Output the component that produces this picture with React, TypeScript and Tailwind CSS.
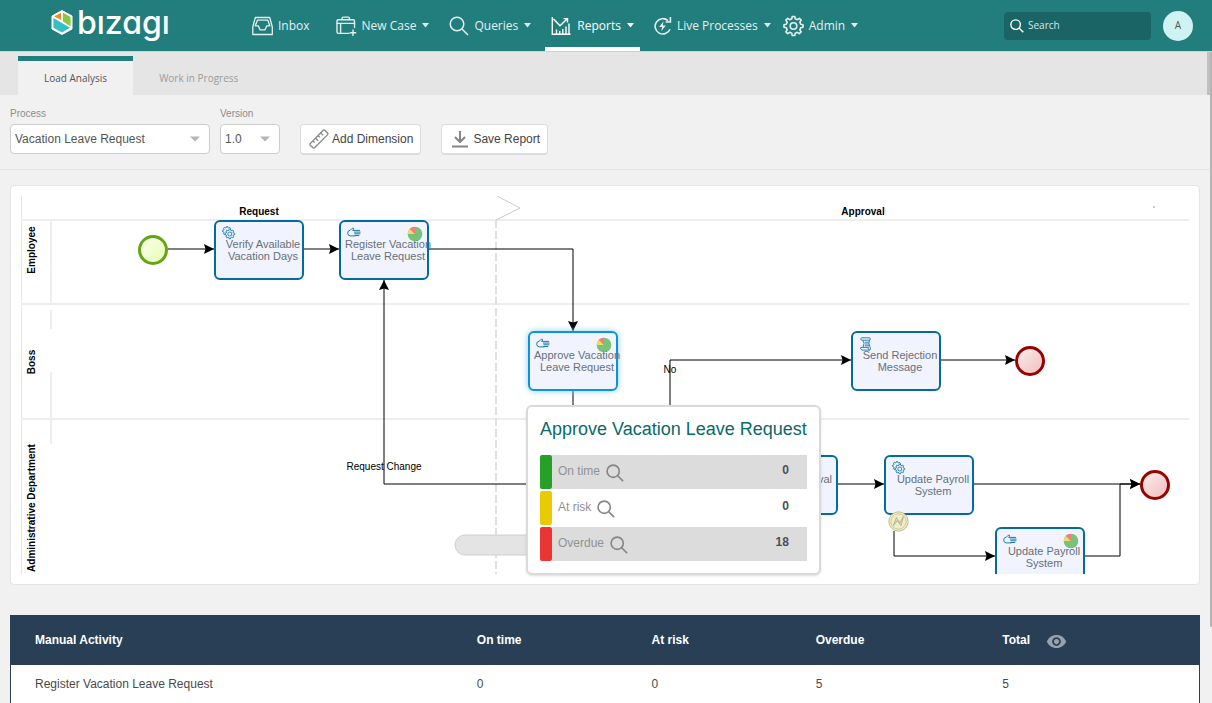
import { useState } from "react";
import type { ReactNode } from "react";
import { MdVisibility } from "react-icons/md";

type NodeKind = "service" | "manual" | "script";

interface FlowNode {
  id: string;
  label: string[];
  kind: NodeKind;
  left: number;
  top: number;
  active?: boolean;
  alignEnd?: boolean;
}

const NODES: FlowNode[] = [
  { id: "verify", label: ["Verify Available", "Vacation Days"], kind: "service", left: 193, top: 24 },
  { id: "register", label: ["Register Vacation", "Leave Request"], kind: "manual", left: 318, top: 24 },
  { id: "approve", label: ["Approve Vacation", "Leave Request"], kind: "manual", left: 507, top: 135, active: true },
  { id: "reject", label: ["Send Rejection", "Message"], kind: "script", left: 830, top: 135 },
  { id: "approval", label: ["Approval"], kind: "script", left: 727, top: 259, alignEnd: true },
  { id: "payroll", label: ["Update Payroll", "System"], kind: "service", left: 863, top: 259 },
  { id: "payroll-manual", label: ["Update Payroll", "System"], kind: "manual", left: 974, top: 331 },
];

const STATUS = [
  { label: "On time", value: 0, bar: "bg-[#27a027]", row: "bg-[#dcdcdc]" },
  { label: "At risk", value: 0, bar: "bg-[#e9cb05]", row: "bg-white" },
  { label: "Overdue", value: 18, bar: "bg-[#ec3434]", row: "bg-[#dcdcdc]" },
];

const ROWS = [{ name: "Register Vacation Leave Request", onTime: 0, atRisk: 0, overdue: 5, total: 5 }];

function gearPath(cx: number, cy: number, outer: number, inner: number, teeth = 8) {
  const pts: string[] = [];
  const step = (Math.PI * 2) / teeth;
  for (let i = 0; i < teeth; i++) {
    const a = i * step - Math.PI / 2;
    const corners: [number, number][] = [
      [-0.3, inner],
      [-0.17, outer],
      [0.17, outer],
      [0.3, inner],
    ];
    for (const [f, r] of corners) {
      pts.push(`${(cx + Math.cos(a + f * step) * r).toFixed(2)} ${(cy + Math.sin(a + f * step) * r).toFixed(2)}`);
    }
  }
  return `M${pts.join("L")}Z`;
}

function LogoMark() {
  return (
    <svg width="22" height="25" viewBox="0 0 22 25">
      <path d="M11 0.5 21 6v13l-10 5.5L1 19V6z" fill="#fff" stroke="#fff" strokeWidth="1" strokeLinejoin="round" />
      <path d="M10 2.8v7L3 6.5z" fill="#f08a1d" />
      <path d="M12 2.8 19.6 7v9.3L12 11.5z" fill="#8dc63f" />
      <path d="M2.4 8 19 17.8 11 22.4 2.4 17.8z" fill="#35bfc4" />
    </svg>
  );
}

function InboxIcon() {
  return (
    <svg width="21" height="20" viewBox="0 0 21 20" fill="none" stroke="currentColor" strokeWidth="1.3" strokeLinejoin="round">
      <path d="M3.3 1.5h14.4l2.6 9.5v7.5H.8V11z" />
      <path d="M5.4 4.2h10.4l2 5.6h-3l-1.7 4H8l-1.7-4h-3z" />
    </svg>
  );
}

function CaseIcon() {
  return (
    <svg width="21" height="20" viewBox="0 0 21 20" fill="none" stroke="currentColor" strokeWidth="1.4" strokeLinecap="round" strokeLinejoin="round">
      <path d="M18.5 11.5V5q0-1.3-1.3-1.3H2.3Q1 3.7 1 5v11q0 1.4 1.4 1.4H13" />
      <path d="M6 3.5V2.4Q6 1.1 7.3 1.1h4.8q1.3 0 1.3 1.3v1.1M1 7.4h17.5M4.6 7.6v9.5M17 14v5.4M14.3 16.7h5.4" />
    </svg>
  );
}

function SearchIcon({ size, width = 1.5 }: { size: number; width?: number }) {
  return (
    <svg className="shrink-0" width={size} height={size} viewBox="0 0 20 20" fill="none" stroke="currentColor" strokeWidth={width}>
      <circle cx="8" cy="8" r="6.8" />
      <path d="M13 13l6 6" />
    </svg>
  );
}

function ChartIcon() {
  return (
    <svg width="21" height="20" viewBox="0 0 21 20" fill="none" stroke="currentColor" strokeWidth="1.4">
      <path d="M1.3 1v17.3h18.2M5.5 18v-4.5M8.7 18v-3M11.8 18v-5M15 18v-7.5M18 18V7.5" />
      <path d="M2.5 3l6.5 6.7L16 3M12.5 2.6h4v4" />
    </svg>
  );
}

function LiveIcon() {
  return (
    <svg width="18" height="20" viewBox="0 0 18 20" fill="none" stroke="currentColor" strokeWidth="1.6">
      <path d="M14 4.6A7.7 7.7 0 1 0 16 13.2M16.4 1v5h-4.8" />
      <path d="M9.6 5.2 5.2 10.9h3l-1 4.3 4.6-5.8h-3z" fill="currentColor" stroke="none" />
    </svg>
  );
}

function GearIcon() {
  return (
    <svg width="21" height="22" viewBox="0 0 21 22" fill="none" stroke="currentColor" strokeWidth="1.6" strokeLinejoin="round">
      <path d={gearPath(10.5, 11, 9.6, 7.4)} />
      <circle cx="10.5" cy="11" r="3.3" />
    </svg>
  );
}

function Caret() {
  return (
    <svg className="ml-1.5" width="7" height="5" viewBox="0 0 7 5">
      <path d="M0 0h7L3.5 4.5z" fill="currentColor" />
    </svg>
  );
}

function NavItem({ icon, label, menu = true, active = false }: { icon: ReactNode; label: string; menu?: boolean; active?: boolean }) {
  return (
    <button
      className={`flex items-center h-[51px] px-1.5 text-xs cursor-pointer border-b-4 pt-1 ${
        active ? "border-white text-white" : "border-transparent text-[#e4f0ef]"
      }`}
    >
      {icon}
      <span className="ml-[5px] whitespace-nowrap">{label}</span>
      {menu && <Caret />}
    </button>
  );
}

function KindIcon({ kind }: { kind: NodeKind }) {
  if (kind === "service") {
    return (
      <svg width="14" height="14" viewBox="0 0 14 14" fill="none" stroke="#1f78ab" strokeWidth="0.9" strokeLinejoin="round">
        <path d={gearPath(5, 5, 4.5, 3.5)} />
        <path d={gearPath(7.8, 8, 4.9, 3.8)} fill="#f0f4ff" />
        <circle cx="7.8" cy="8" r="2" />
      </svg>
    );
  }
  if (kind === "script") {
    return (
      <svg width="14" height="14" viewBox="0 0 14 14" fill="none" stroke="#1f78ab" strokeWidth="0.9">
        <path d="M2.5 .8h8.2q1.3 1.2 0 2.4H2.5q-1.8-1.2 0-2.4zM3.8 3.2q2.4 2.8.2 7M10.6 3.2q-1.6 3 .3 6.5 1.6 3.4-1 3.4" />
        <path d="M1.8 10.4h7.6q-1 1.5 1.2 2.7H3q-2-1-1.2-2.7zM5.8 5.2h4M6 7h3.8M5.8 8.8h4.6" />
      </svg>
    );
  }
  return (
    <svg width="14" height="14" viewBox="0 0 14 14" fill="none" stroke="#1f78ab" strokeWidth="1" strokeLinecap="round" strokeLinejoin="round">
      <path d="M8 9.9H3.4Q.7 9.8.7 7.1T3.3 4.2L5.2 2.3q1.8-.6 1.4.9L5.6 4.4h7" />
      <path d="M7.4 6.1h5.8M7.8 7.8h5.2M7.8 9.5h4" />
    </svg>
  );
}

function Pie() {
  return (
    <svg width="16" height="16" viewBox="0 0 16 16">
      <circle cx="8" cy="8" r="7.3" fill="#78c27a" />
      <path d="M8 8H.7A7.3 7.3 0 0 1 2.84 2.84z" fill="#f1db63" />
      <path d="M8 8 2.84 2.84A7.3 7.3 0 0 1 8 .7z" fill="#f47b80" />
    </svg>
  );
}

function TaskNode({ node }: { node: FlowNode }) {
  return (
    <button
      className={`absolute w-[90px] h-[60px] rounded-md border-2 bg-[#f1f4ff] cursor-pointer ${
        node.active ? "border-[#0a95d9] shadow-[0_0_6px_#8fc9ec]" : "border-[#056a9c]"
      }`}
      style={{ left: node.left, top: node.top }}
    >
      <span className="absolute left-[6px] top-1">
        <KindIcon kind={node.kind} />
      </span>
      {node.kind === "manual" && (
        <span className="absolute left-[66px] top-1">
          <Pie />
        </span>
      )}
      <span
        className={`absolute inset-x-0 top-4 flex flex-col text-[11px] leading-3 text-[#667079] whitespace-nowrap ${
          node.alignEnd ? "items-end pr-1" : "items-center pl-2"
        }`}
      >
        {node.label.map(line => (
          <span key={line}>{line}</span>
        ))}
      </span>
    </button>
  );
}

function FlowLines() {
  return (
    <svg className="absolute inset-0 w-full h-full">
      <defs>
        <marker id="arrow" viewBox="0 0 10 10" refX="10" refY="5" markerWidth="10" markerHeight="10" markerUnits="userSpaceOnUse" orient="auto">
          <path d="M0 0 10 5 0 10 1.5 5z" />
        </marker>
        <linearGradient id="start" x1="0" y1="0" x2="1" y2="1">
          <stop offset="0" stopColor="#fbfff0" />
          <stop offset="1" stopColor="#e6fdae" />
        </linearGradient>
        <linearGradient id="end" x1="0" y1="0" x2="1" y2="1">
          <stop offset="0" stopColor="#fdeeee" />
          <stop offset="1" stopColor="#f0bcbc" />
        </linearGradient>
      </defs>

      {/* lanes */}
      <path d="M.5 0v378" stroke="#e6e6e6" />
      <g stroke="#eeeeee" strokeWidth="2">
        <line x1="0" y1="24" x2="100%" y2="24" />
        <line x1="0" y1="108" x2="100%" y2="108" />
        <line x1="0" y1="223" x2="100%" y2="223" />
        <path d="M30 24v84M30 114v19M30 176v72" />
      </g>
      <path d="M475 24v354" stroke="#e0e0e0" strokeWidth="2" strokeDasharray="8 3" />
      <path d="M476 0l23 12-24 12" fill="none" stroke="#cccccc" />
      <rect x="1132" y="10" width="2" height="2" fill="#cccccc" />
      <rect x="434" y="339" width="180" height="20" rx="10" fill="#e4e4e4" stroke="#d0d0d0" />

      {/* sequence flows */}
      <g fill="none" stroke="#000" markerEnd="url(#arrow)">
        <path d="M147 53H193" />
        <path d="M283 53H318" />
        <path d="M408 53H552V135" />
        <path d="M552 195v60" />
        <path d="M649 255V164H830" />
        <path d="M920 164h74" />
        <path d="M552 288H363V84" />
        <path d="M817 288h46" />
        <path d="M953 288h166" />
        <path d="M873 335v25H974" />
        <path d="M1064 360h35V288h20" />
      </g>

      {/* events */}
      <g strokeWidth="3">
        <circle cx="132" cy="54" r="13.5" fill="url(#start)" stroke="#62a616" />
        <circle cx="1009" cy="165" r="13.5" fill="url(#end)" stroke="#990000" />
        <circle cx="1134" cy="289" r="13.5" fill="url(#end)" stroke="#990000" />
      </g>

      <g fontSize="10" textAnchor="middle">
        <g fontWeight="bold">
          <text x="238" y="19">Request</text>
          <text x="842" y="19">Approval</text>
          <text transform="translate(14 54) rotate(-90)">Employee</text>
          <text transform="translate(14 166) rotate(-90)">Boss</text>
          <text transform="translate(14 312) rotate(-90)">Administrative Department</text>
        </g>
        <text x="363" y="274">Request Change</text>
        <text x="649" y="177">No</text>
      </g>
    </svg>
  );
}

function ErrorEvent() {
  return (
    <svg className="absolute left-[867px] top-[315px]" width="21" height="21" viewBox="0 0 21 21" fill="#f0edca" stroke="#c2bc8c">
      <circle cx="10.5" cy="10.5" r="9.7" />
      <circle cx="10.5" cy="10.5" r="7.7" strokeWidth="0.8" />
      <path d="M5.5 14.5 8.3 6.5l3.6 5.2 3.4-6-2.3 9-3.8-5z" fill="#e2dcae" stroke="#a8a276" strokeWidth="0.7" />
    </svg>
  );
}

function StatusPopover() {
  return (
    <div className="absolute left-[515px] top-[219px] border-2 border-[#dadada] rounded-md bg-white px-3 pb-3 shadow-sm">
      <h2 className="h-12 pt-2 text-lg leading-7 text-[#0a6a66] whitespace-nowrap">Approve Vacation Leave Request</h2>
      <div className="flex flex-col gap-0.5 text-xs">
        {STATUS.map(s => (
          <div key={s.label} className="flex h-[34px]">
            <span className={`w-3 rounded-xs ${s.bar}`} />
            <div className={`flex-1 flex items-center pl-1.5 pr-[18px] ${s.row}`}>
              <span className="text-[#929292] pb-0.5">{s.label}</span>
              <button className="ml-1.5 pt-0.5 text-[#858585] cursor-pointer" aria-label={s.label}>
                <SearchIcon size={18} width={1.8} />
              </button>
              <strong className="ml-auto pb-1 text-[#4a4f5c]">{s.value}</strong>
            </div>
          </div>
        ))}
      </div>
    </div>
  );
}

function SelectBox({ id, label, value, onChange, options, width }: {
  id: string;
  label: string;
  value: string;
  onChange: (v: string) => void;
  options: string[];
  width: string;
}) {
  return (
    <div className={width}>
      <label htmlFor={id} className="block text-[10px] leading-5 text-[#8c8c8c]">{label}</label>
      <div className="relative">
        <select
          id={id}
          value={value}
          onChange={e => onChange(e.target.value)}
          className="block w-full h-[30px] appearance-none rounded border border-[#cccccc] bg-white pl-1 text-xs text-[#555555] outline-none"
        >
          {options.map(o => (
            <option key={o}>{o}</option>
          ))}
        </select>
        <svg className="absolute right-[10px] top-3 pointer-events-none" width="10" height="6" viewBox="0 0 10 6">
          <path d="M0 .5h10L5 5.5z" fill="#b5b5b5" />
        </svg>
      </div>
    </div>
  );
}

function ToolButton({ icon, children }: { icon: ReactNode; children: ReactNode }) {
  return (
    <button className="flex items-center gap-[3px] h-[31px] rounded border border-b-2 border-[#dcdcdc] bg-white pl-2 pr-[7px] text-xs text-[#444444] cursor-pointer">
      {icon}
      {children}
    </button>
  );
}

export default function App() {
  const [process, setProcess] = useState("Vacation Leave Request");
  const [version, setVersion] = useState("1.0");

  return (
    <div className="relative min-h-screen bg-[#f1f1f1] font-['Liberation_Sans',sans-serif]">
      {/* Top bar */}
      <header className="flex items-center h-[52px] bg-[#227d7d] border-b border-[#c9d3d3] pl-[51px] pr-[19px] font-['Open_Sans',sans-serif]">
        <a href="#" aria-label="bizagi" className="flex items-center w-[195px] pb-1.5 text-white">
          <LogoMark />
          <span className="ml-1 text-[32px] leading-10 font-medium font-['Inter',sans-serif] [font-feature-settings:'cv11']">bızagı</span>
        </a>
        <nav className="flex">
          <div className="flex gap-2 mr-2">
            <NavItem icon={<InboxIcon />} label="Inbox" menu={false} />
            <div className="flex gap-2 pl-1.5">
              <NavItem icon={<CaseIcon />} label="New Case" />
              <NavItem icon={<SearchIcon size={20} />} label="Queries" />
              <NavItem icon={<ChartIcon />} label="Reports" active />
            </div>
          </div>
          <div className="flex">
            <NavItem icon={<LiveIcon />} label="Live Processes" />
            <NavItem icon={<GearIcon />} label="Admin" />
          </div>
        </nav>
        <label className="flex items-center ml-auto w-[147px] h-7 rounded bg-[#1b6466] pl-1.5 text-white">
          <SearchIcon size={14} width={2} />
          <input placeholder="Search" aria-label="Search" className="ml-1 w-full min-w-0 bg-transparent text-[10px] placeholder-[#d5e6e5] outline-none" />
        </label>
        <button className="ml-3 size-[30px] rounded-full bg-[#cff3f3] text-[10px] text-[#44595a] cursor-pointer">A</button>
      </header>

      {/* Tabs */}
      <div className="flex items-end h-[43px] bg-[#e5e5e5] pl-[18px] font-['Open_Sans',sans-serif] text-[10px]">
        <button className="h-[39px] border-t-5 border-[#227d7d] bg-[#f1f1f1] px-[26px] text-[#555555] cursor-pointer">Load Analysis</button>
        <button className="h-[39px] pt-[5px] px-[26px] text-[#9b9b9b] cursor-pointer">Work in Progress</button>
      </div>

      {/* Filters */}
      <div className="flex items-end gap-5 px-2.5 pt-[9px] pb-[14px] border-b border-[#e5e5e5]">
        <div className="flex gap-2.5 pb-px">
          <SelectBox id="process" label="Process" value={process} onChange={setProcess} options={["Vacation Leave Request"]} width="w-[200px]" />
          <SelectBox id="version" label="Version" value={version} onChange={setVersion} options={["1.0"]} width="w-[60px]" />
        </div>
        <ToolButton
          icon={
            <svg width="20" height="20" viewBox="0 0 20 20" fill="none" stroke="#858585" strokeWidth="1.3" strokeLinejoin="round">
              <path d="M1.2 14.6 14.2 1.2q.8-.6 1.6 0l2.8 2.8q.6.8 0 1.6L5.6 18.8q-.8.6-1.6 0L1.2 16.2q-.6-.8 0-1.6z" />
              <path d="M4 12l1.6 1.6M6.6 9.3l2.4 2.4M9.2 6.6l1.6 1.6M11.8 4l2.4 2.4" />
            </svg>
          }
        >
          Add Dimension
        </ToolButton>
        <ToolButton
          icon={
            <svg width="20" height="20" viewBox="0 0 20 20" fill="none" stroke="#858585" strokeWidth="2">
              <path d="M10 2v10.5M5 8l5 5 5-5M2 17.5h16" />
            </svg>
          }
        >
          Save Report
        </ToolButton>
      </div>

      <main className="pl-2.5 pr-3 pt-[15px]">
        {/* Process diagram */}
        <section className="relative rounded border border-[#e4e4e4] bg-white p-2.5">
          <div className="relative h-[378px] overflow-hidden">
            <FlowLines />
            {NODES.map(n => (
              <TaskNode key={n.id} node={n} />
            ))}
            <ErrorEvent />
          </div>
          <StatusPopover />
        </section>

        {/* Activity totals */}
        <table className="mt-[30px] w-full table-fixed border-x border-[#293f56] bg-white text-left text-xs text-[#4a4a4a]">
          <thead className="bg-[#293f56] text-white">
            <tr className="h-[50px]">
              <th className="w-[37.2%] pl-6">Manual Activity</th>
              <th className="w-[14.7%] pl-6">On time</th>
              <th className="w-[13.8%] pl-6">At risk</th>
              <th className="w-[15.7%] pl-6">Overdue</th>
              <th className="pl-6">
                <div className="flex items-center">
                  Total
                  <button aria-label="Total" className="ml-4 pt-0.5 text-[#98a2ad] cursor-pointer">
                    <MdVisibility size={21} />
                  </button>
                </div>
              </th>
            </tr>
          </thead>
          <tbody>
            {ROWS.map(r => (
              <tr key={r.name} className="h-[38px]">
                <td className="pl-6">{r.name}</td>
                <td className="pl-6">{r.onTime}</td>
                <td className="pl-6">{r.atRisk}</td>
                <td className="pl-6">{r.overdue}</td>
                <td className="pl-6">{r.total}</td>
              </tr>
            ))}
          </tbody>
        </table>
      </main>

      {/* Scroll thumb */}
      <div className="absolute right-0 top-[52px] w-[5px] h-[43px] bg-[#c0c0c0]" />
      <div className="absolute right-0 top-[52px] w-0.5 h-[575px] rounded-b bg-[#b5b5b5]" />
    </div>
  );
}
